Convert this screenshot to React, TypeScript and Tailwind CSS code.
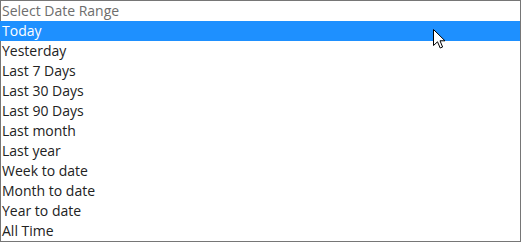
const options = [
  "Today",
  "Yesterday",
  "Last 7 Days",
  "Last 30 Days",
  "Last 90 Days",
  "Last month",
  "Last year",
  "Week to date",
  "Month to date",
  "Year to date",
  "All Time",
];

export default function App() {
  return (
    <div className="bg-white w-[522px] h-[242px]">
      <div
        className="relative w-[521px] h-[242px] border border-[#767676] bg-white text-[14px] leading-[20px]"
        style={{ fontFamily: '"Open Sans", sans-serif' }}
      >
        <div className="h-[20px] pl-[1px] text-[#6d6d6d]">Select Date Range</div>
        {options.map((opt, i) => (
          <div
            key={opt}
            className={
              i === 0
                ? "h-[20px] -ml-px pl-[2px] bg-[#1e90ff] text-white"
                : "h-[20px] pl-[1px] text-[#222]"
            }
          >
            {opt}
          </div>
        ))}

        {/* mouse pointer */}
        <svg
          className="absolute left-[432px] top-[28px]"
          width="13"
          height="20"
          viewBox="0 0 13 20"
        >
          <path
            d="M0.5 0.5 L0.5 16.5 L4.5 12.8 L7.2 19 L9.6 18 L7 11.8 L12 11.8 Z"
            fill="white"
            stroke="black"
            strokeWidth="1"
            strokeLinejoin="miter"
          />
        </svg>
      </div>
    </div>
  );
}
